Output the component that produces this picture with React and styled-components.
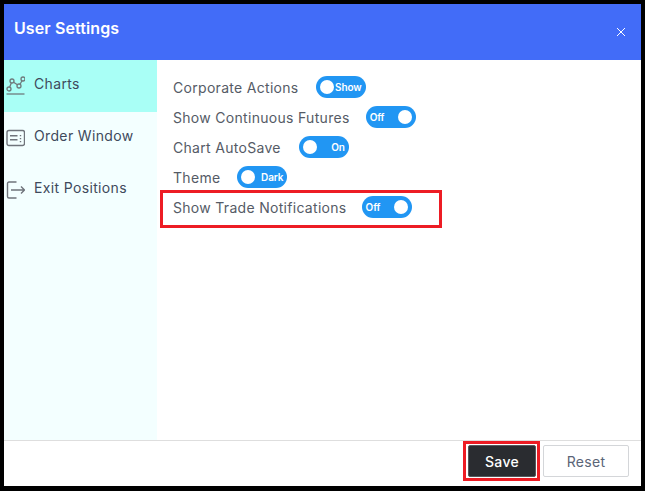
import React from "react";
import styled, { createGlobalStyle } from "styled-components";

const Global = createGlobalStyle`
  html, body {
    margin: 0;
    padding: 0;
    background: #000;
  }
  body {
    font-family: Inter, "Liberation Sans", sans-serif;
  }
`;

const Frame = styled.div`
  width: 645px;
  height: 491px;
  box-sizing: border-box;
  padding: 4px 4px 5px 4px;
  background: #000;
`;

const Dialog = styled.div`
  height: 100%;
  display: flex;
  flex-direction: column;
  background: #fff;
`;

const Header = styled.div`
  height: 56px;
  flex: none;
  box-sizing: border-box;
  padding: 13px 15px 0 10px;
  display: flex;
  justify-content: space-between;
  align-items: flex-start;
  background: #426cf8;
`;

const Title = styled.div`
  color: #fff;
  font-size: 16px;
  font-weight: 600;
  line-height: 22px;
  letter-spacing: 0.1px;
`;

const Close = styled.svg`
  margin-top: 10px;
  width: 10px;
  height: 10px;
`;

const Body = styled.div`
  flex: 1;
  display: flex;
  min-height: 0;
`;

const Sidebar = styled.div`
  width: 153px;
  flex: none;
  background: #f3ffff;
`;

const NavItem = styled.div`
  height: 52px;
  box-sizing: border-box;
  padding: 14px 0 0 2px;
  display: flex;
  align-items: flex-start;
  gap: 9px;
  background: ${({ $active }) => ($active ? "#a9fff6" : "transparent")};
`;

const NavIcon = styled.svg`
  width: 19px;
  height: 22px;
  flex: none;
`;

const NavLabel = styled.span`
  font-size: 14px;
  line-height: 20px;
  letter-spacing: 0.35px;
  color: #3f4a5c;
`;

const Content = styled.div`
  flex: 1;
  padding: 12px 0 0 16px;
`;

const Row = styled.div`
  position: relative;
  height: 30px;
  display: flex;
  align-items: center;
  gap: ${({ $gap }) => $gap}px;
`;

const RowLabel = styled.span`
  font-size: 14px;
  letter-spacing: 0.3px;
  color: #555b66;
  white-space: nowrap;
`;

const Track = styled.div`
  width: 50px;
  height: 22px;
  flex: none;
  box-sizing: border-box;
  padding: 0 4px;
  border-radius: 11px;
  background: #2196f3;
  color: #fff;
  font-size: 10px;
  font-weight: 600;
  display: flex;
  align-items: center;
  justify-content: space-between;
  flex-direction: ${({ $knobRight }) => ($knobRight ? "row" : "row-reverse")};
`;

const Knob = styled.span`
  width: 14px;
  height: 14px;
  border-radius: 50%;
  background: #fff;
  flex: none;
`;

const TrackText = styled.span`
  letter-spacing: -0.1px;
`;

const RowHighlight = styled.div`
  position: absolute;
  left: -13px;
  top: -2px;
  width: 282px;
  height: 38px;
  box-sizing: border-box;
  border: 3px solid #ed1c24;
  pointer-events: none;
`;

const Footer = styled.div`
  height: 46px;
  flex: none;
  box-sizing: border-box;
  border-top: 1px solid #dedede;
  padding: 4px 12px 0 0;
  display: flex;
  justify-content: flex-end;
  align-items: flex-start;
  gap: 7px;
`;

const SaveWrap = styled.div`
  position: relative;
`;

const SaveOutline = styled.div`
  position: absolute;
  top: -4px;
  bottom: -4px;
  left: -5px;
  right: -4px;
  border: 3px solid #ed1c24;
  box-sizing: border-box;
  pointer-events: none;
`;

const Button = styled.button`
  width: 86px;
  height: 32px;
  padding: 0;
  box-sizing: border-box;
  border-radius: 2px;
  font-family: inherit;
  font-size: 14px;
  letter-spacing: 0.3px;
  border: 1px solid ${({ $primary }) => ($primary ? "#55585c" : "#d4d6d9")};
  background: ${({ $primary }) => ($primary ? "#2a2c30" : "#fff")};
  color: ${({ $primary }) => ($primary ? "#fff" : "#5b6577")};
  font-weight: ${({ $primary }) => ($primary ? 500 : 400)};
`;

const SaveButton = styled(Button)`
  width: 68px;
  display: block;
`;

const settings = [
  { label: "Corporate Actions", text: "Show", knobRight: false, gap: 17 },
  { label: "Show Continuous Futures", text: "Off", knobRight: true, gap: 16 },
  { label: "Chart AutoSave", text: "On", knobRight: false, gap: 18 },
  { label: "Theme", text: "Dark", knobRight: false, gap: 17 },
  { label: "Show Trade Notifications", text: "Off", knobRight: true, gap: 15, marked: true },
];

function ChartIcon() {
  return (
    <NavIcon viewBox="0 0 19 22" fill="none" stroke="#6f7a7c" strokeWidth="1.3">
      <circle cx="3" cy="15" r="2" />
      <circle cx="6" cy="7" r="2" />
      <circle cx="13" cy="12" r="2" />
      <circle cx="17" cy="5" r="2" />
      <path d="M3.7 13.1 5.3 8.9M7.6 8.2l3.8 2.6M14 10.3l2-3.6" />
      <path d="M0.5 20h18" strokeWidth="1.3" />
    </NavIcon>
  );
}

function OrderIcon() {
  return (
    <NavIcon viewBox="0 0 19 22" fill="none" stroke="#6f747b" strokeWidth="1.4">
      <rect x="1" y="4.5" width="17.5" height="15" rx="2" />
      <path d="M4 9.8h7.5M4 13.7h7.5M14.5 9v1.2M14.5 12v1.2M14.5 15v1.2" />
    </NavIcon>
  );
}

function ExitIcon() {
  return (
    <NavIcon viewBox="0 0 19 22" fill="none" stroke="#6f747b" strokeWidth="1.4">
      <path d="M10.5 4H3a1.5 1.5 0 0 0-1.5 1.5v13A1.5 1.5 0 0 0 3 20h7.5" />
      <path d="M5 12h13.5M15 8.5l3.5 3.5-3.5 3.5" />
    </NavIcon>
  );
}

export default function App() {
  return (
    <Frame>
      <Global />
      <Dialog>
        <Header>
          <Title>User Settings</Title>
          <Close viewBox="0 0 10 10" stroke="#fff" strokeWidth="1">
            <path d="M1 1l8 8M9 1l-8 8" />
          </Close>
        </Header>
        <Body>
          <Sidebar>
            <NavItem $active>
              <ChartIcon />
              <NavLabel>Charts</NavLabel>
            </NavItem>
            <NavItem>
              <OrderIcon />
              <NavLabel>Order Window</NavLabel>
            </NavItem>
            <NavItem>
              <ExitIcon />
              <NavLabel>Exit Positions</NavLabel>
            </NavItem>
          </Sidebar>
          <Content>
            {settings.map((s) => (
              <Row key={s.label} $gap={s.gap}>
                <RowLabel>{s.label}</RowLabel>
                <Track $knobRight={s.knobRight}>
                  <TrackText>{s.text}</TrackText>
                  <Knob />
                </Track>
                {s.marked && <RowHighlight />}
              </Row>
            ))}
          </Content>
        </Body>
        <Footer>
          <SaveWrap>
            <SaveButton $primary>Save</SaveButton>
            <SaveOutline />
          </SaveWrap>
          <Button>Reset</Button>
        </Footer>
      </Dialog>
    </Frame>
  );
}
